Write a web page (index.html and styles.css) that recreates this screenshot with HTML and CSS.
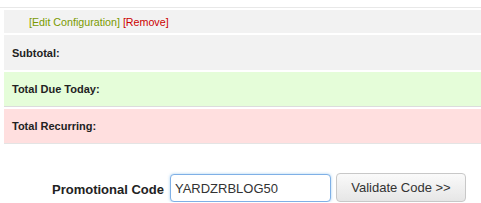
FILE: index.html
```html
<!DOCTYPE html>
<html lang="en">
<head>
    <meta charset="UTF-8">
    <title>Order Summary</title>
    <link rel="stylesheet" href="styles.css">
</head>
<body>

<div class="topline"></div>

<div class="summary">
    <div class="row row-config">
        <span><span class="edit">[Edit Configuration]</span> <span class="remove">[Remove]</span></span>
    </div>
    <div class="row row-sub">Subtotal:</div>
    <div class="row row-today">Total Due Today:</div>
    <div class="row row-recur">Total Recurring:</div>
</div>

<!-- Promo code -->
<form class="promo">
    <label for="promocode">Promotional Code</label>
    <input type="text" id="promocode" class="promo-input" value="YARDZRBLOG50">
    <button type="button" class="promo-btn">Validate Code &gt;&gt;</button>
</form>

</body>
</html>
```

FILE: styles.css
```css
body {
    font-family: "Liberation Sans", Arial, sans-serif;
    color: #222;
    margin: 0;
    padding: 0;
    background-color: #ffffff;
}

.topline {
    height: 7px;
    border-bottom: 1px solid #e8e8e8;
}

.summary {
    display: flex;
    flex-direction: column;
    gap: 2px;
    margin-top: 2px;
    margin-left: 4px;
}

.row {
    display: flex;
    align-items: center;
    box-sizing: border-box;
    font-size: 11px;
    font-weight: bold;
    padding-left: 8px;
}

.row-config {
    height: 23px;
    padding-left: 25px;
    font-weight: normal;
    font-size: 10.7px;
    background-color: #f2f2f2;
}

.edit {
    color: #7a9a01;
}

.remove {
    color: #cc0000;
}

.row-sub {
    height: 35px;
    background-color: #f2f2f2;
}

.row-today {
    height: 35px;
    background-color: #e5fdd9;
    border-bottom: 1px solid #dcdcdc;
}

.row-recur {
    height: 35px;
    background-color: #ffdfdf;
    border-bottom: 1px solid #e4e4e4;
}

.promo {
    display: flex;
    align-items: center;
    margin-top: 29px;
    padding-left: 52px;
}

.promo label {
    font-size: 13px;
    font-weight: bold;
    margin-top: 4px;
    margin-right: 6px;
}

.promo-input {
    width: 161px;
    height: 28px;
    box-sizing: border-box;
    margin: 1px 5px 0 0;
    padding: 0 4px;
    font-family: "Liberation Sans", Arial, sans-serif;
    font-size: 13px;
    color: #333;
    border: 1px solid #7fb0e6;
    border-radius: 4px;
    box-shadow: 0 0 3px rgba(102, 175, 233, 0.6);
    outline: none;
}

.promo-btn {
    width: 130px;
    height: 29px;
    font-family: "Liberation Sans", Arial, sans-serif;
    font-size: 13px;
    color: #333;
    border: 1px solid #c8c8c8;
    border-radius: 4px;
    background: linear-gradient(#fafafa, #e6e6e6);
}
```
